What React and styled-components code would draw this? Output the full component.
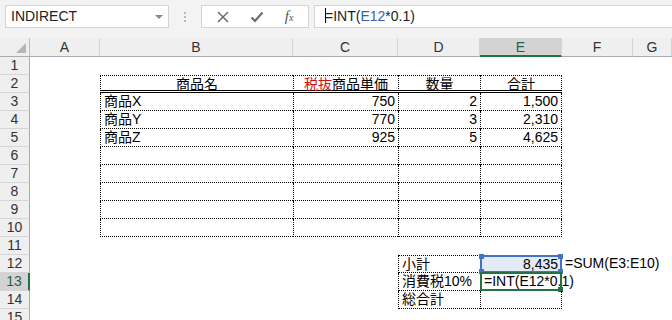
import React from 'react';
import styled, { createGlobalStyle } from 'styled-components';

const GlobalStyle = createGlobalStyle`
  html, body {
    margin: 0;
    padding: 0;
    background: #fff;
  }
  body {
    width: 672px;
    height: 320px;
    overflow: hidden;
    font-family: "Liberation Sans", "Noto Sans CJK JP", sans-serif;
  }
`;

const WIDTHS = [30, 70, 193, 105, 82, 82, 71, 39];
const TEMPLATE = WIDTHS.map((w) => `${w}px`).join(' ');
const COLS = ['A', 'B', 'C', 'D', 'E', 'F', 'G'];
const GREEN = '#217346';
const BLUE = '#4472c4';

// ---------- toolbar ----------
const Toolbar = styled.div`
  display: flex;
  height: 38px;
  box-sizing: border-box;
  padding: 5px 0 0 5px;
  background: #f3f3f3;
`;

const Box = styled.div`
  position: relative;
  display: flex;
  align-items: center;
  height: 23px;
  box-sizing: border-box;
  background: #fff;
  border: 1px solid #d4d4d4;
  width: ${(p) => (p.$width ? `${p.$width}px` : 'auto')};
  flex: ${(p) => (p.$grow ? 1 : 'none')};
  margin-left: ${(p) => (p.$grow ? '5px' : '0')};
  border-right: ${(p) => (p.$grow ? 'none' : '1px solid #d4d4d4')};
`;

const NameText = styled.span`
  padding-left: 5px;
  font-size: 14px;
  line-height: 17px;
  color: #222;
  flex: 1;
`;

const Arrow = styled.span`
  width: 0;
  height: 0;
  margin-right: 5px;
  border-left: 4px solid transparent;
  border-right: 4px solid transparent;
  border-top: 4px solid #888;
`;

const Grip = styled.div`
  width: 32px;
  height: 23px;
  display: flex;
  flex-direction: column;
  align-items: center;
  justify-content: center;
  gap: 2px;
  span {
    width: 2px;
    height: 2px;
    background: #b8b8b8;
  }
`;

const Buttons = styled.div`
  display: flex;
  width: 100%;
  justify-content: space-around;
  align-items: center;
  padding: 0 4px;
`;

const Fx = styled.span`
  font-family: "Liberation Serif", serif;
  font-style: italic;
  font-size: 15px;
  line-height: 17px;
  color: #555;
  sub {
    font-size: 10px;
    vertical-align: 0;
  }
`;

const Formula = styled.span`
  padding-left: 10px;
  font-size: 14px;
  line-height: 17px;
  color: #222;
  white-space: nowrap;
`;

const Caret = styled.span`
  display: inline-block;
  width: 1px;
  height: 15px;
  background: #000;
  vertical-align: -2px;
  margin-right: -1px;
`;

const Ref = styled.span`
  color: #3b5fa8;
`;

// ---------- sheet ----------
const Sheet = styled.div`
  display: grid;
  grid-template-columns: ${TEMPLATE};
`;

const Corner = styled.div`
  position: relative;
  height: 19px;
  box-sizing: border-box;
  background: #efefef;
  border-right: 1px solid #bdbdbd;
  border-bottom: 1px solid #ababab;
  svg {
    position: absolute;
    right: 3px;
    bottom: 3px;
  }
`;

const ColHead = styled.div`
  height: 19px;
  box-sizing: border-box;
  background: ${(p) => (p.$active ? '#d3d3d3' : '#efefef')};
  border-right: 1px solid #d5d5d5;
  border-bottom: ${(p) => (p.$active ? `2px solid ${GREEN}` : '1px solid #ababab')};
  font-size: 14px;
  line-height: 18px;
  text-align: center;
  color: ${(p) => (p.$active ? '#2c5e45' : '#333')};
`;

const RowHead = styled.div`
  height: 18px;
  box-sizing: border-box;
  background: ${(p) => (p.$active ? '#d3d3d3' : '#efefef')};
  border-bottom: 1px solid #d5d5d5;
  border-right: ${(p) => (p.$active ? `2px solid ${GREEN}` : '1px solid #ababab')};
  font-size: 14px;
  line-height: 17px;
  text-align: center;
  color: ${(p) => (p.$active ? '#2c5e45' : '#333')};
`;

const DOT = '1px dotted #000';

const Cell = styled.div`
  position: relative;
  height: 18px;
  box-sizing: border-box;
  padding: 0 3px;
  font-size: 14px;
  line-height: 17px;
  white-space: nowrap;
  color: #000;
  text-align: ${(p) => p.$align || 'left'};
  background: ${(p) => p.$fill || 'transparent'};
  border-top: ${(p) => (p.$top ? DOT : 'none')};
  border-left: ${(p) => (p.$left ? DOT : 'none')};
  border-right: ${(p) => (p.$right ? DOT : 'none')};
  border-bottom: ${(p) => (p.$bottom === 'double' ? '3px double #000' : p.$bottom ? DOT : 'none')};
`;

const Red = styled.span`
  color: #cc1111;
`;

const Frame = styled.div`
  position: absolute;
  top: -1px;
  left: -1px;
  right: -1px;
  bottom: -1px;
  border: 2px solid ${(p) => p.$color};
  pointer-events: none;
`;

const Handle = styled.span`
  position: absolute;
  width: 5px;
  height: 5px;
  background: ${(p) => p.$color};
  ${(p) => (p.$v === 'top' ? 'top: -3px;' : 'bottom: -3px;')}
  ${(p) => (p.$h === 'left' ? 'left: -3px;' : 'right: -3px;')}
`;

// sparse content, keyed by row number then column index (A=0)
const content = {
  2: {
    1: { text: '商品名', align: 'center' },
    2: { text: (<><Red>税抜</Red>商品単価</>), align: 'center' },
    3: { text: '数量', align: 'center' },
    4: { text: '合計', align: 'center' },
  },
  3: { 1: { text: '商品X' }, 2: { text: '750', align: 'right' }, 3: { text: '2', align: 'right' }, 4: { text: '1,500', align: 'right' } },
  4: { 1: { text: '商品Y' }, 2: { text: '770', align: 'right' }, 3: { text: '3', align: 'right' }, 4: { text: '2,310', align: 'right' } },
  5: { 1: { text: '商品Z' }, 2: { text: '925', align: 'right' }, 3: { text: '5', align: 'right' }, 4: { text: '4,625', align: 'right' } },
  12: {
    3: { text: '小計' },
    4: { text: '8,435', align: 'right', fill: '#e3ebf7', frame: BLUE },
    5: { text: '=SUM(E3:E10)' },
  },
  13: {
    3: { text: '消費税10%' },
    4: { text: '=INT(E12*0.1)', frame: GREEN },
  },
  14: { 3: { text: '総合計' } },
};

const tables = [
  { r1: 2, r2: 10, c1: 1, c2: 4, headDouble: true },
  { r1: 12, r2: 14, c1: 3, c2: 4 },
];

const bordersFor = (r, c) => {
  const t = tables.find((tb) => r >= tb.r1 && r <= tb.r2 && c >= tb.c1 && c <= tb.c2);
  if (!t) return {};
  return {
    top: r === t.r1,
    left: true,
    right: c === t.c2,
    bottom: t.headDouble && r === t.r1 ? 'double' : true,
  };
};

const CornerHandles = ({ color, all }) => (
  <>
    {all && <Handle $color={color} $v="top" $h="left" />}
    {all && <Handle $color={color} $v="top" $h="right" />}
    {all && <Handle $color={color} $v="bottom" $h="left" />}
    <Handle $color={color} $v="bottom" $h="right" />
  </>
);

const App = () => {
  const rows = Array.from({ length: 15 }, (_, i) => i + 1);
  return (
    <>
      <GlobalStyle />
      <Toolbar>
        <Box $width={164}>
          <NameText>INDIRECT</NameText>
          <Arrow />
        </Box>
        <Grip>
          <span />
          <span />
          <span />
        </Grip>
        <Box $width={108}>
          <Buttons>
            <svg width="12" height="12" viewBox="0 0 12 12">
              <path d="M1 1 L11 11 M11 1 L1 11" stroke="#6b6b6b" strokeWidth="1.5" fill="none" />
            </svg>
            <svg width="14" height="12" viewBox="0 0 14 12">
              <path d="M1.5 6.5 L5 10 L12.5 1.5" stroke="#6b6b6b" strokeWidth="2.2" fill="none" />
            </svg>
            <Fx>
              f<sub>x</sub>
            </Fx>
          </Buttons>
        </Box>
        <Box $grow>
          <Formula>
            <Caret />
            =INT(<Ref>E12</Ref>*0.1)
          </Formula>
        </Box>
      </Toolbar>
      <Sheet>
        <Corner>
          <svg width="10" height="10" viewBox="0 0 10 10">
            <path d="M10 0 L10 10 L0 10 Z" fill="#b5b5b5" />
          </svg>
        </Corner>
        {COLS.map((c) => (
          <ColHead key={c} $active={c === 'E'}>
            {c}
          </ColHead>
        ))}
        {rows.map((r) => (
          <React.Fragment key={r}>
            <RowHead $active={r === 13}>{r}</RowHead>
            {COLS.map((_, c) => {
              const item = (content[r] && content[r][c]) || {};
              const b = bordersFor(r, c);
              return (
                <Cell
                  key={c}
                  $align={item.align}
                  $fill={item.fill}
                  $top={b.top}
                  $left={b.left}
                  $right={b.right}
                  $bottom={b.bottom}
                >
                  {item.text}
                  {item.frame && (
                    <Frame $color={item.frame}>
                      <CornerHandles color={item.frame} all={item.frame === BLUE} />
                    </Frame>
                  )}
                </Cell>
              );
            })}
          </React.Fragment>
        ))}
      </Sheet>
    </>
  );
};

export default App;
